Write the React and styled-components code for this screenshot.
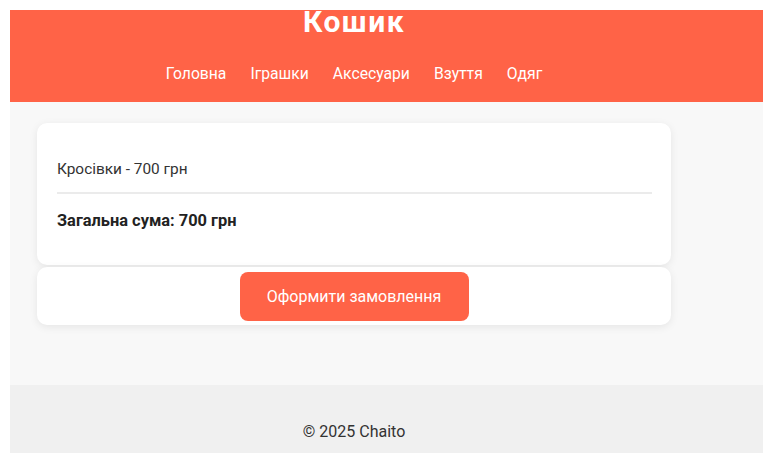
import styled, { createGlobalStyle } from "styled-components";

const Global = createGlobalStyle`
  html, body {
    margin: 0;
    padding: 0;
    background: #ffffff;
    font-family: Roboto, "Liberation Sans", Arial, sans-serif;
    color: #333;
  }
`;

const Page = styled.div`
  padding: 10px 0 4px 10px;
`;

const Header = styled.header`
  background: #ff6347;
  height: 92px;
`;

const HeaderInner = styled.div`
  width: 688px;
  display: flex;
  flex-direction: column;
  align-items: center;
`;

const Title = styled.h1`
  margin: 0;
  font-size: 30px;
  line-height: 24px;
  letter-spacing: 1.5px;
  font-weight: 700;
  color: #fff;
`;

const Nav = styled.nav`
  display: flex;
  gap: 24px;
  margin-top: 30px;
`;

const NavLink = styled.a`
  color: #fff;
  font-size: 15.7px;
  line-height: 20px;
  text-decoration: none;
`;

const Main = styled.main`
  background: #f8f8f8;
  height: 283px;
  padding: 21px 0 0 27px;
  box-sizing: border-box;
`;

const Card = styled.section`
  width: 634px;
  box-sizing: border-box;
  background: #fff;
  border-radius: 10px;
  box-shadow: 0 2px 8px rgba(0, 0, 0, 0.08);
  padding: ${(p) => p.$pad};
  margin-bottom: 2px;
  display: flex;
  flex-direction: column;
  align-items: ${(p) => (p.$center ? "center" : "stretch")};
`;

const Item = styled.div`
  font-size: 15.4px;
  line-height: 20px;
  padding-bottom: 13px;
  border-bottom: 2px solid #ebebeb;
`;

const Total = styled.div`
  font-size: 16.4px;
  line-height: 20px;
  font-weight: 700;
  color: #222;
  margin-top: 17px;
`;

const Button = styled.button`
  width: 229px;
  height: 49px;
  border: none;
  border-radius: 8px;
  background: #ff6347;
  color: #fff;
  font-family: inherit;
  font-size: 16px;
  cursor: pointer;
`;

const FooterBand = styled.div`
  background: #f0f0f0;
`;

const Footer = styled.footer`
  height: 68px;
  width: 688px;
  display: flex;
  justify-content: center;
  align-items: flex-end;
  padding-bottom: 11px;
  box-sizing: border-box;
  font-size: 16px;
  line-height: 20px;
  color: #333;
`;

const links = ["Головна", "Іграшки", "Аксесуари", "Взуття", "Одяг"];

export default function App() {
  return (
    <Page>
      <Global />
      <Header>
        <HeaderInner>
          <Title>Кошик</Title>
          <Nav>
            {links.map((l) => (
              <NavLink key={l} href="#">{l}</NavLink>
            ))}
          </Nav>
        </HeaderInner>
      </Header>
      <Main>
        <Card $pad="36px 19px 34px 20px">
          <Item>Кросівки - 700 грн</Item>
          <Total>Загальна сума: 700 грн</Total>
        </Card>
        <Card $pad="5px 0 4px" $center>
          <Button>Оформити замовлення</Button>
        </Card>
      </Main>
      <FooterBand>
        <Footer>© 2025 Chaito</Footer>
      </FooterBand>
    </Page>
  );
}
